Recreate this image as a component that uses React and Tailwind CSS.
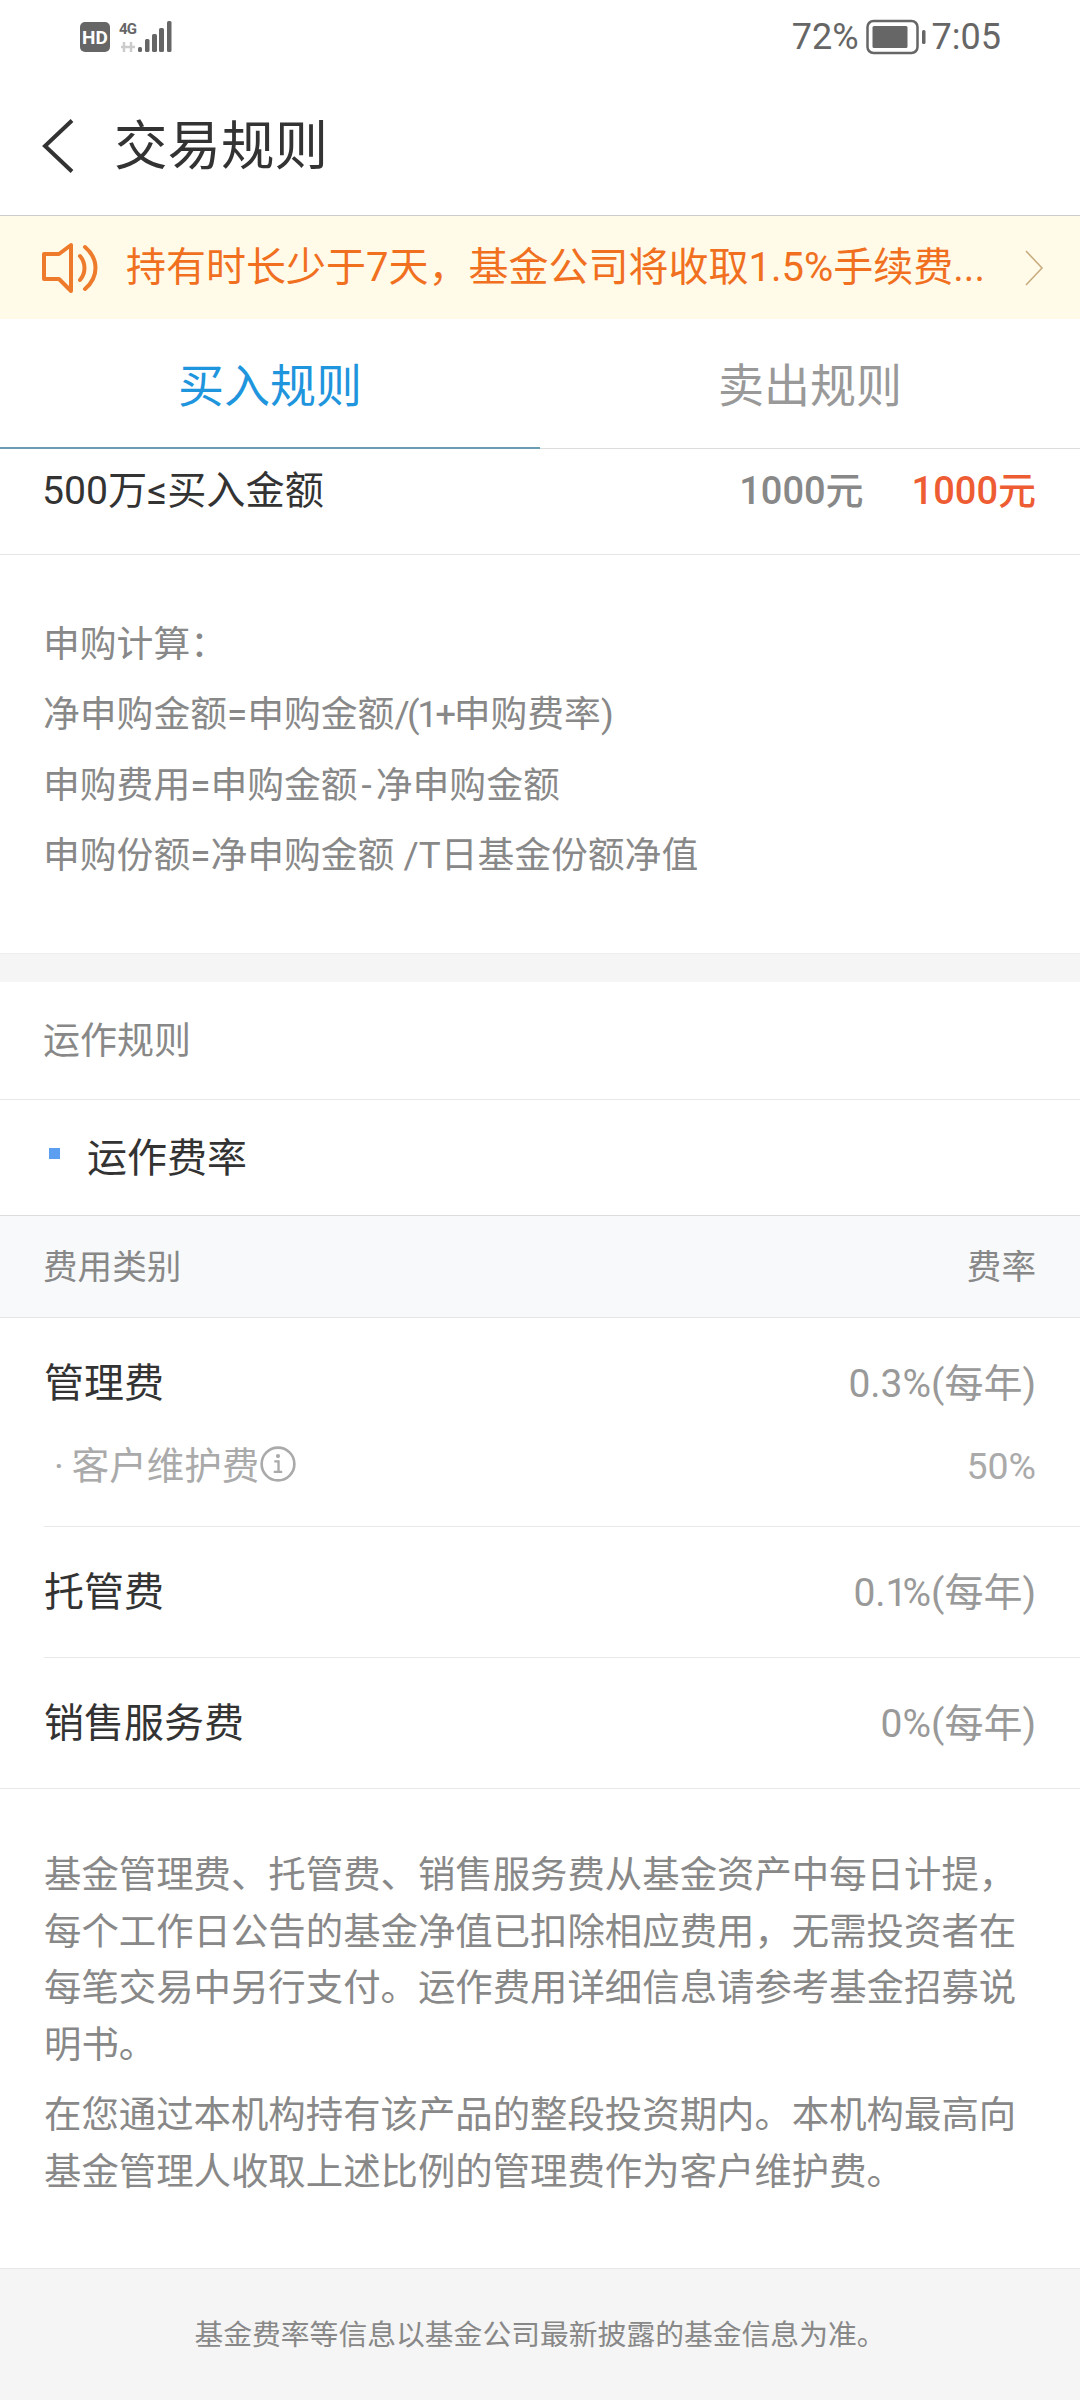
const font = { fontFamily: "Roboto, 'Noto Sans CJK SC', sans-serif" };

function StatusBar() {
  return (
    <div className="h-[74px] flex items-center justify-between pl-[80px] pr-[79px] text-[#666]">
      <div className="flex items-center gap-[8px]">
        <div className="w-[30px] h-[30px] rounded-[5px] bg-[#666] text-white text-[19px] font-bold flex items-center justify-center leading-none">
          HD
        </div>
        <svg width="54" height="32" viewBox="0 0 54 32">
          <text x="1" y="13" fontSize="15" fontWeight="700" fill="#666" textLength="18" fontFamily="Roboto">4G</text>
          <path d="M6 21v10M13 21v10M3 26h14" stroke="#ccc" strokeWidth="2.5" />
          <rect x="20" y="26" width="4" height="5" rx="1.5" fill="#666" />
          <rect x="27" y="18" width="4.5" height="13" rx="1.5" fill="#666" />
          <rect x="34" y="13" width="5" height="18" rx="1.5" fill="#666" />
          <rect x="41" y="7" width="5" height="24" rx="1.5" fill="#666" />
          <rect x="49" y="0" width="4.5" height="31" rx="1.5" fill="#666" />
        </svg>
      </div>
      <div className="flex items-center text-[36px] leading-none">
        <span>72%</span>
        <svg className="ml-[7px] mr-[6px]" width="60" height="36" viewBox="0 0 60 36">
          <rect x="1.5" y="2" width="50" height="32" rx="6" fill="none" stroke="#666" strokeWidth="2.5" />
          <rect x="6.5" y="7" width="35" height="22" rx="1.5" fill="#666" />
          <rect x="56" y="11" width="3.5" height="14" rx="1.5" fill="#666" />
        </svg>
        <span>7:05</span>
      </div>
    </div>
  );
}

function Header() {
  return (
    <div className="h-[142px] flex items-center border-b border-[#ccc]">
      <svg className="ml-[40px] mt-[2px]" width="34" height="54" viewBox="0 0 34 54" fill="none" stroke="#333" strokeWidth="4">
        <path d="M32 1.5 5 27l27 25.5" />
      </svg>
      <span className="ml-[40px] text-[53.5px] text-[#333] leading-none pt-[4px]">交易规则</span>
    </div>
  );
}

function Notice() {
  return (
    <div className="h-[103px] bg-[#fffbe8] flex items-center text-[#f0701f]">
      <svg className="ml-[42px]" width="59" height="52" viewBox="0 0 59 52" fill="none" stroke="#ee7a2c" strokeWidth="4" strokeLinejoin="round">
        <path d="M2 12h15L29 3v46L17 37H2z" />
        <path d="M38 14c6 7 6 17 0 24" strokeLinecap="round" />
        <path d="M43 5c14 12 14 30 0 42" strokeLinecap="round" />
      </svg>
      <span className="ml-[25px] w-[880px] text-[40px] leading-none whitespace-nowrap">持有时长少于7天，基金公司将收取1.5%手续费...</span>
      <svg className="ml-[18px]" width="20" height="36" viewBox="0 0 20 36" fill="none" stroke="#c9ad80" strokeWidth="1.6">
        <path d="m2 1 16 17L2 35" />
      </svg>
    </div>
  );
}

function Tabs() {
  return (
    <div className="h-[130px] flex border-b border-[#ddd] relative pt-[5px]">
      <div className="w-[540px] flex items-center justify-center text-[46px] text-[#1f95dd]">买入规则</div>
      <div className="w-[540px] flex items-center justify-center text-[46px] text-[#999]">卖出规则</div>
      <div className="absolute left-0 bottom-[-1px] w-[540px] h-[2px] bg-[#6a9cb4]" />
    </div>
  );
}

function AmountRow() {
  return (
    <div className="h-[106px] flex items-center justify-between pl-[42px] pr-[44px] pb-[20px] border-b border-[#e5e5e5]">
      <span className="text-[39.2px] text-[#333]">500万≤买入金额</span>
      <div className="flex gap-[48px] text-[38px] font-medium">
        <span className="text-[#888]">1000元</span>
        <span className="text-[#ee5c33]">1000元</span>
      </div>
    </div>
  );
}

function Formula() {
  return (
    <div className="h-[399px] pl-[43px] pt-[54px] border-b border-[#eee] text-[36.8px] text-[#888]">
      <div className="h-[70.5px] flex items-center">申购计算：</div>
      <div className="h-[70.5px] flex items-center whitespace-pre">
        净申购金额=申购金额<span className="tracking-[-2.5px]">/(1+</span>申购费率)
      </div>
      <div className="h-[70.5px] flex items-center whitespace-pre">
        申购费用=申购金额<span className="px-[4px]">-</span>净申购金额
      </div>
      <div className="h-[70.5px] flex items-center whitespace-pre">
        申购份额=净申购金额 /T日基金份额净值
      </div>
    </div>
  );
}

function FeeRow({ name, value, height }) {
  return (
    <div className={`${height} flex items-center justify-between pt-[2px]`}>
      <span className="text-[40px] text-[#333]">{name}</span>
      <span className="text-[39px] text-[#999]">{value}</span>
    </div>
  );
}

export default function App() {
  return (
    <div className="w-[1080px] h-[2400px] bg-white overflow-hidden relative" style={font}>
      <StatusBar />
      <Header />
      <Notice />
      <Tabs />
      <AmountRow />
      <Formula />
      <div className="h-[28px] bg-[#f5f5f5]" />
      <div className="h-[118px] pl-[43px] pt-[2px] flex items-center text-[37px] text-[#888] border-b border-[#e8e8e8]">运作规则</div>
      <div className="h-[116px] flex items-center border-b border-[#ddd]">
        <div className="ml-[49px] w-[11px] h-[11px] bg-[#5c9ff0] mb-[8px]" />
        <span className="ml-[27px] text-[40px] text-[#333] pt-[2px]">运作费率</span>
      </div>
      <div className="h-[102px] bg-[#f8f9fb] flex items-center justify-between pl-[43px] pr-[44px] pt-[2px] text-[34.6px] text-[#888] border-b border-[#e5e5e5]">
        <span>费用类别</span>
        <span>费率</span>
      </div>
      <div className="pl-[44px]">
        <div className="pr-[44px] h-[209px] pt-[31px] border-b border-[#e8e8e8]">
          <div className="h-[70px] flex items-center justify-between">
            <span className="text-[40px] text-[#333]">管理费</span>
            <span className="text-[39px] text-[#999]">0.3%(每年)</span>
          </div>
          <div className="mt-[12px] h-[70px] flex items-center justify-between text-[37.5px] text-[#aaa]">
            <span className="flex items-center">
              <span className="ml-[10px] mr-[8px]">·</span>客户维护费
              <svg width="38" height="38" viewBox="0 0 36 36" className="mb-[4px]" fill="none">
                <circle cx="18" cy="18" r="15.5" stroke="#aaa" strokeWidth="2.5" />
                <circle cx="18" cy="10.5" r="2" fill="#aaa" />
                <path d="M14.5 15.5h4v10M14 25.5h8" stroke="#aaa" strokeWidth="2.2" />
              </svg>
            </span>
            <span>50%</span>
          </div>
        </div>
        <div className="pr-[44px] border-b border-[#e8e8e8]">
          <FeeRow
            name="托管费"
            value={<>0.<span className="tracking-[-5px]">1</span>%(每年)</>}
            height="h-[130px]"
          />
        </div>
        <div className="pr-[44px]">
          <FeeRow name="销售服务费" value="0%(每年)" height="h-[130px]" />
        </div>
      </div>
      <div className="h-[480px] border-t border-[#e8e8e8] px-[44px] pt-[58px] text-[37.4px] text-[#888] leading-[56.5px]">
        <p>基金管理费、托管费、销售服务费从基金资产中每日计提，每个工作日公告的基金净值已扣除相应费用，无需投资者在每笔交易中另行支付。运作费用详细信息请参考基金招募说明书。</p>
        <p className="mt-[14px]">在您通过本机构持有该产品的整段投资期内。本机构最高向基金管理人收取上述比例的管理费作为客户维护费。</p>
      </div>
      <div className="h-[132px] bg-[#f5f5f5] border-t border-[#e8e8e8] pt-[2px] flex items-center justify-center text-[28.8px] text-[#888]">
        基金费率等信息以基金公司最新披露的基金信息为准。
      </div>
    </div>
  );
}
